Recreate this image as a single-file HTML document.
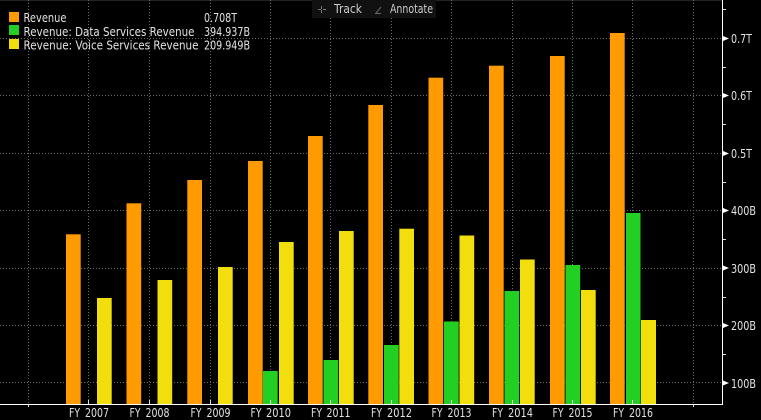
<!DOCTYPE html>
<html>
<head>
<meta charset="utf-8">
<style>
html,body{margin:0;padding:0;background:#000;width:761px;height:420px;overflow:hidden}
svg{display:block}
text{font-family:"DejaVu Sans","Liberation Sans",sans-serif;font-size:12px;fill:#e2e2e2}
.g line{stroke:#6c6c6c;stroke-width:1;stroke-dasharray:1 2}
.o{fill:#ff9a00}.n{fill:#22cf22}.y{fill:#f1de0c}
</style>
</head>
<body>
<svg width="761" height="420" viewBox="0 0 761 420" xmlns="http://www.w3.org/2000/svg">
<rect width="761" height="420" fill="#000"/>
<line x1="0" y1="0.5" x2="722" y2="0.5" stroke="#222"/>
<g class="g">
<line x1="28.5" y1="0" x2="28.5" y2="404"/><line x1="88.5" y1="0" x2="88.5" y2="404"/><line x1="149.5" y1="0" x2="149.5" y2="404"/><line x1="210.5" y1="0" x2="210.5" y2="404"/><line x1="270.5" y1="0" x2="270.5" y2="404"/><line x1="330.5" y1="0" x2="330.5" y2="404"/><line x1="391.5" y1="0" x2="391.5" y2="404"/><line x1="451.5" y1="0" x2="451.5" y2="404"/><line x1="512.5" y1="0" x2="512.5" y2="404"/><line x1="572.5" y1="0" x2="572.5" y2="404"/><line x1="632.5" y1="0" x2="632.5" y2="404"/><line x1="693.5" y1="0" x2="693.5" y2="404"/>
<line x1="0" y1="38.5" x2="722" y2="38.5"/><line x1="0" y1="95.5" x2="722" y2="95.5"/><line x1="0" y1="153.5" x2="722" y2="153.5"/><line x1="0" y1="210.5" x2="722" y2="210.5"/><line x1="0" y1="268.5" x2="722" y2="268.5"/><line x1="0" y1="325.5" x2="722" y2="325.5"/><line x1="0" y1="382.5" x2="722" y2="382.5"/>
</g>
<!-- orange -->
<rect class="o" x="66" y="234.300" width="14.700" height="169.700"/>
<rect class="o" x="126.500" y="203.300" width="14.700" height="200.700"/>
<rect class="o" x="187.300" y="180" width="14.700" height="224"/>
<rect class="o" x="248" y="161" width="14.700" height="243"/>
<rect class="o" x="308" y="136" width="14.700" height="268"/>
<rect class="o" x="368.300" y="105" width="14.700" height="299"/>
<rect class="o" x="428.500" y="77.700" width="14.700" height="326.300"/>
<rect class="o" x="489" y="65.700" width="14.700" height="338.300"/>
<rect class="o" x="550" y="56" width="14.700" height="348"/>
<rect class="o" x="610" y="33" width="14.700" height="371"/>
<!-- green -->
<rect class="n" x="263" y="371" width="14.700" height="33"/>
<rect class="n" x="323.500" y="360" width="14.700" height="44"/>
<rect class="n" x="384" y="345" width="14.700" height="59"/>
<rect class="n" x="444" y="321.500" width="14.700" height="82.500"/>
<rect class="n" x="504.500" y="291" width="14.700" height="113"/>
<rect class="n" x="565.500" y="265" width="14.700" height="139"/>
<rect class="n" x="626" y="213" width="14.500" height="191"/>
<!-- yellow -->
<rect class="y" x="97" y="298" width="14.700" height="106"/>
<rect class="y" x="157.500" y="280" width="14.700" height="124"/>
<rect class="y" x="218" y="267" width="14.700" height="137"/>
<rect class="y" x="279" y="242" width="14.700" height="162"/>
<rect class="y" x="339" y="231" width="14.700" height="173"/>
<rect class="y" x="399.300" y="228.700" width="14.700" height="175.300"/>
<rect class="y" x="459.500" y="235.500" width="14.700" height="168.500"/>
<rect class="y" x="520" y="259.500" width="14.700" height="144.500"/>
<rect class="y" x="581" y="290" width="14.700" height="114"/>
<rect class="y" x="641" y="320" width="15" height="84"/>
<!-- axes -->
<line x1="0" y1="404.500" x2="723" y2="404.500" stroke="#fff"/>
<line x1="722.500" y1="0" x2="722.500" y2="405" stroke="#fff"/>
<g stroke="#ddd">
<line x1="28.500" y1="405" x2="28.500" y2="407"/><line x1="88.500" y1="400" x2="88.500" y2="404"/><line x1="149.500" y1="400" x2="149.500" y2="404"/><line x1="210.500" y1="400" x2="210.500" y2="404"/><line x1="270.500" y1="400" x2="270.500" y2="404"/><line x1="330.500" y1="400" x2="330.500" y2="404"/><line x1="391.500" y1="400" x2="391.500" y2="404"/><line x1="451.500" y1="400" x2="451.500" y2="404"/><line x1="512.500" y1="400" x2="512.500" y2="404"/><line x1="572.500" y1="400" x2="572.500" y2="404"/><line x1="632.500" y1="400" x2="632.500" y2="404"/><line x1="693.500" y1="405" x2="693.500" y2="407"/>
<line x1="723" y1="9.500" x2="726" y2="9.500"/><line x1="723" y1="67.500" x2="726" y2="67.500"/><line x1="723" y1="124.500" x2="726" y2="124.500"/><line x1="723" y1="182.500" x2="726" y2="182.500"/><line x1="723" y1="239.500" x2="726" y2="239.500"/><line x1="723" y1="297.500" x2="726" y2="297.500"/><line x1="723" y1="354.500" x2="726" y2="354.500"/>
</g>
<g fill="#fff">
<path d="M723 36l6 2.500-6 2.500z"/><path d="M723 93l6 2.500-6 2.500z"/><path d="M723 151l6 2.500-6 2.500z"/><path d="M723 208l6 2.500-6 2.500z"/><path d="M723 265.500l6 2.500-6 2.500z"/><path d="M723 323l6 2.500-6 2.500z"/><path d="M723 380.500l6 2.500-6 2.500z"/>
</g>
<!-- y labels -->
<text x="731" y="43" textLength="21" lengthAdjust="spacingAndGlyphs">0.7T</text>
<text x="731" y="100" textLength="21" lengthAdjust="spacingAndGlyphs">0.6T</text>
<text x="731" y="158" textLength="21" lengthAdjust="spacingAndGlyphs">0.5T</text>
<text x="731" y="215" textLength="25" lengthAdjust="spacingAndGlyphs">400B</text>
<text x="731" y="273" textLength="25" lengthAdjust="spacingAndGlyphs">300B</text>
<text x="731" y="330" textLength="25" lengthAdjust="spacingAndGlyphs">200B</text>
<text x="731" y="388" textLength="25" lengthAdjust="spacingAndGlyphs">100B</text>
<!-- x labels -->
<text x="69" y="417" textLength="11" lengthAdjust="spacingAndGlyphs">FY</text><text x="85" y="417" textLength="24" lengthAdjust="spacingAndGlyphs">2007</text>
<text x="129.500" y="417" textLength="11" lengthAdjust="spacingAndGlyphs">FY</text><text x="145.500" y="417" textLength="24" lengthAdjust="spacingAndGlyphs">2008</text>
<text x="190.500" y="417" textLength="11" lengthAdjust="spacingAndGlyphs">FY</text><text x="206.500" y="417" textLength="24" lengthAdjust="spacingAndGlyphs">2009</text>
<text x="250.500" y="417" textLength="11" lengthAdjust="spacingAndGlyphs">FY</text><text x="266" y="417" textLength="25" lengthAdjust="spacingAndGlyphs">2010</text>
<text x="311" y="417" textLength="11" lengthAdjust="spacingAndGlyphs">FY</text><text x="326.500" y="417" textLength="24" lengthAdjust="spacingAndGlyphs">2011</text>
<text x="371" y="417" textLength="11" lengthAdjust="spacingAndGlyphs">FY</text><text x="387" y="417" textLength="25" lengthAdjust="spacingAndGlyphs">2012</text>
<text x="431.500" y="417" textLength="11" lengthAdjust="spacingAndGlyphs">FY</text><text x="447.500" y="417" textLength="24" lengthAdjust="spacingAndGlyphs">2013</text>
<text x="492" y="417" textLength="11" lengthAdjust="spacingAndGlyphs">FY</text><text x="508" y="417" textLength="25" lengthAdjust="spacingAndGlyphs">2014</text>
<text x="552.500" y="417" textLength="11" lengthAdjust="spacingAndGlyphs">FY</text><text x="568.500" y="417" textLength="24" lengthAdjust="spacingAndGlyphs">2015</text>
<text x="613" y="417" textLength="11" lengthAdjust="spacingAndGlyphs">FY</text><text x="629" y="417" textLength="24" lengthAdjust="spacingAndGlyphs">2016</text>
<!-- legend -->
<rect class="o" x="9" y="12" width="10" height="10"/>
<rect class="n" x="9" y="25" width="10" height="10"/>
<rect class="y" x="9" y="39" width="10" height="10"/>
<text x="23.500" y="22" textLength="43" lengthAdjust="spacingAndGlyphs">Revenue</text>
<text x="23.500" y="36" textLength="171" lengthAdjust="spacingAndGlyphs">Revenue: Data Services Revenue</text>
<text x="23.500" y="49.500" textLength="175" lengthAdjust="spacingAndGlyphs">Revenue: Voice Services Revenue</text>
<text x="204" y="22" textLength="33" lengthAdjust="spacingAndGlyphs">0.708T</text>
<text x="204" y="36" textLength="46" lengthAdjust="spacingAndGlyphs">394.937B</text>
<text x="204" y="49.500" textLength="46" lengthAdjust="spacingAndGlyphs">209.949B</text>
<!-- toolbar -->
<rect x="312" y="0" width="124" height="18" fill="#111"/>
<g fill="none">
<path d="M318 9.500h3M323 9.500h3M321.500 6v3M321.500 10v3" stroke="#777"/>
<path d="M376 13l5-6M375 13.500h6" stroke="#666"/>
</g>
<text x="334" y="13" textLength="28" lengthAdjust="spacingAndGlyphs" style="fill:#ccc">Track</text>
<text x="390" y="13" textLength="43" lengthAdjust="spacingAndGlyphs" style="fill:#ccc">Annotate</text>
</svg>
</body>
</html>
